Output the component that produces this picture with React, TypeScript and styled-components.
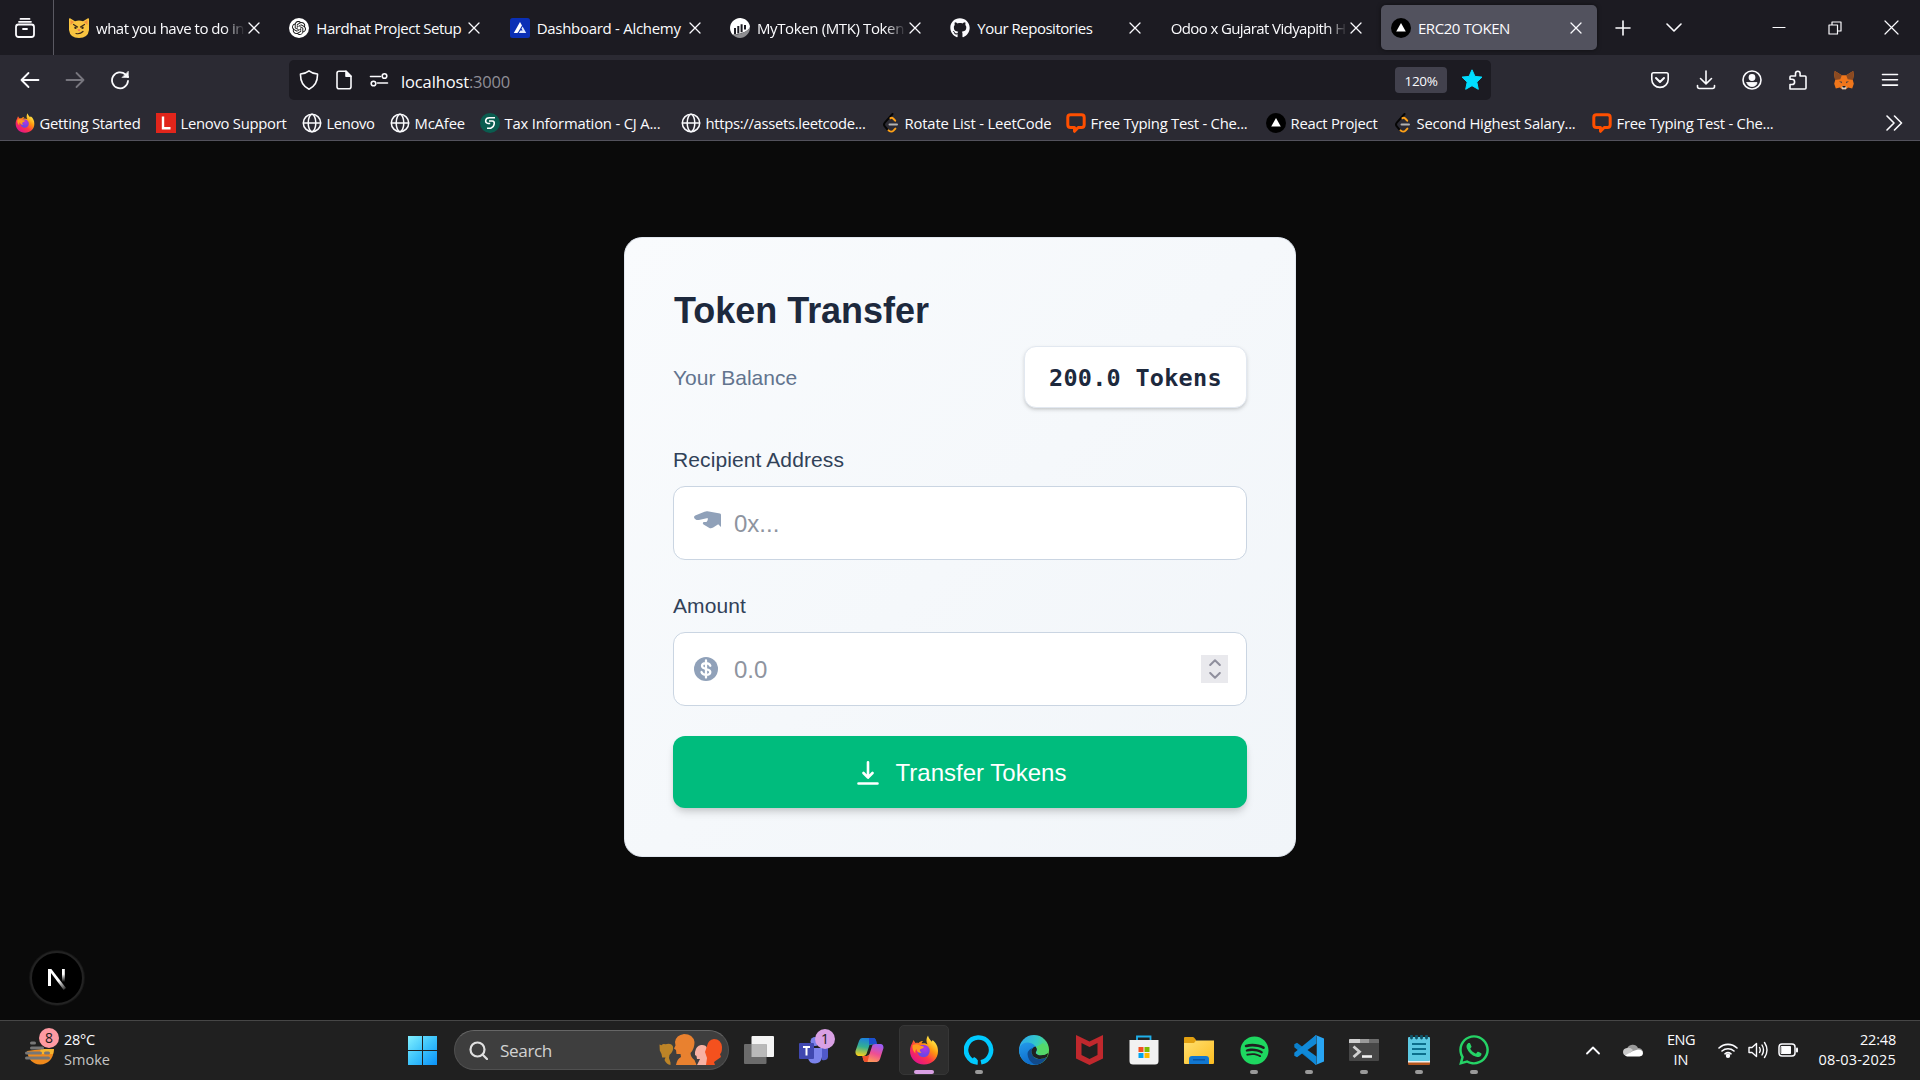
import React, { useLayoutEffect, useRef, useState } from "react";
import styled, { createGlobalStyle, css } from "styled-components";
import { FaGithub, FaSpotify, FaWhatsapp } from "react-icons/fa";
import { SiOpenai } from "react-icons/si";

const ui = `"Open Sans", "Noto Sans", sans-serif`;
const body = `"Liberation Sans", Arial, sans-serif`;

const Global = createGlobalStyle`
  * { box-sizing: border-box; }
  body { margin: 0; background: #0a0a0a; overflow: hidden; }
  svg { display: block; flex: none; }
`;

const Screen = styled.div`
  width: 1920px;
  height: 1080px;
  display: flex;
  flex-direction: column;
  font-family: ${ui};
  font-size: 15px;
  color: #fbfbfe;
`;

/* ---------- text tracked to a given width ---------- */
const Tracked = styled.span`
  display: inline-block;
  white-space: pre;
`;

function Fit({ w, children }: { w: number; children: string }) {
  const ref = useRef<HTMLSpanElement>(null);
  const [spacing, setSpacing] = useState(0);
  useLayoutEffect(() => {
    if (ref.current) {
      const natural = ref.current.getBoundingClientRect().width;
      setSpacing((w - natural) / children.length);
    }
  }, []);
  return (
    <Tracked ref={ref} style={{ letterSpacing: spacing }}>
      {children}
    </Tracked>
  );
}

/* ---------- tab strip ---------- */
const TabStrip = styled.div`
  height: 55px;
  background: #1c1b22;
  display: flex;
  align-items: center;
`;
const ViewButton = styled.div`
  width: 54px;
  height: 55px;
  border-right: 1px solid #5a5962;
  display: flex;
  align-items: center;
  padding: 1px 0 0 15px;
  margin-right: 5px;
`;
const Tab = styled.div<{ $active?: boolean }>`
  width: 216px;
  height: 45px;
  margin-right: 4.33px;
  padding: 0 15px 0 10px;
  border-radius: 5px;
  display: flex;
  align-items: center;
  ${(p) =>
    p.$active &&
    css`
      background: #52525e;
      box-shadow: 0 0 4px rgba(0, 0, 0, 0.5);
    `}
`;
const TabIcon = styled.span`
  width: 20px;
  margin-right: 7px;
  flex: none;
`;
const TabLabel = styled.span<{ $fade?: boolean }>`
  flex: 1;
  overflow: hidden;
  white-space: nowrap;
  line-height: 24px;
  padding-top: 1px;
  margin-right: 3px;
  ${(p) => p.$fade && "mask-image: linear-gradient(to left, transparent, #000 20px);"}
`;
const NewTab = styled.div`
  display: flex;
  align-items: center;
  padding-left: 14px;
  gap: 35px;
`;
const WindowButtons = styled.div`
  margin-left: auto;
  padding-right: 21px;
  display: flex;
  align-items: center;
  gap: 42px;
`;

/* ---------- navigation bar ---------- */
const NavBar = styled.div`
  height: 50px;
  background: #2b2a33;
  display: flex;
  align-items: center;
`;
const NavButtons = styled.div`
  width: 289px;
  padding-left: 20px;
  display: flex;
  gap: 25px;
`;
const UrlBar = styled.div`
  width: 1202px;
  height: 40px;
  border-radius: 5px;
  background: #1c1b22;
  display: flex;
  align-items: center;
  padding: 0 8px 0 10px;
`;
const UrlIcons = styled.div`
  display: flex;
  gap: 15px;
  width: 102px;
`;
const UrlText = styled.div`
  flex: 1;
  font-size: 16.5px;
  line-height: 24px;
  padding-top: 3px;
`;
const Dim = styled.span`
  color: #8f8e96;
`;
const Zoom = styled.div`
  width: 52px;
  height: 26px;
  border-radius: 4px;
  background: #42414d;
  font-size: 13.5px;
  line-height: 28px;
  text-align: center;
  margin-right: 14px;
`;
const ToolIcons = styled.div`
  margin-left: auto;
  width: 250px;
  display: flex;
  justify-content: space-between;
  align-items: center;
  margin-right: 20px;
`;

/* ---------- bookmarks ---------- */
const Bookmarks = styled.div`
  height: 36px;
  background: #2b2a33;
  border-bottom: 1px solid #53525c;
  display: flex;
  align-items: center;
  padding: 0 17px 0 14.5px;
`;
const Bookmark = styled.div<{ $w: number }>`
  width: ${(p) => p.$w}px;
  flex: none;
  display: flex;
  align-items: center;
  gap: 5px;
  line-height: 24px;
  font-size: 14.8px;
`;
const Overflow = styled.div`
  margin-left: auto;
`;

/* ---------- page ---------- */
const Page = styled.main`
  flex: 1;
  background: #0a0a0a;
  position: relative;
  display: flex;
  flex-direction: column;
  align-items: center;
  padding-top: 96px;
  font-family: ${body};
`;
const Card = styled.section`
  width: 672px;
  height: 620px;
  border: 1px solid #e2e8f0;
  border-radius: 18px;
  background: linear-gradient(135deg, #f9fbfd 0%, #f1f5f9 100%);
  padding: 48px;
  display: flex;
  flex-direction: column;
`;
const Title = styled.h1`
  margin: 0 0 11px;
  padding: 1px 0 0 1px;
  font-size: 36px;
  line-height: 48px;
  font-weight: 700;
  color: #1d293d;
`;
const BalanceRow = styled.div`
  display: flex;
  justify-content: space-between;
  align-items: center;
  height: 62px;
  margin-bottom: 37px;
  font-size: 21px;
  color: #62748e;
`;
const BalanceLabel = styled.span`
  padding-top: 2px;
`;
const Balance = styled.div`
  height: 62px;
  width: 223px;
  border: 1px solid #e2e8f0;
  border-radius: 12px;
  background: #fff;
  box-shadow: 0 2px 4px rgba(0, 0, 0, 0.12), 0 2px 3px -1px rgba(0, 0, 0, 0.1);
  padding-left: 24px;
  font-family: "DejaVu Sans Mono", monospace;
  font-weight: 700;
  font-size: 23.5px;
  line-height: 62px;
  color: #1d293d;
`;
const Label = styled.label`
  font-size: 21px;
  line-height: 30px;
  color: #314158;
  margin-bottom: 11px;
`;
const Field = styled.div<{ $gap: number }>`
  height: 74px;
  border: 1px solid #cad5e2;
  border-radius: 12px;
  background: #fff;
  display: flex;
  align-items: center;
  padding: 0 18px 0 20px;
  margin-bottom: ${(p) => p.$gap}px;
`;
const FieldIcon = styled.span<{ $up?: number }>`
  width: 40px;
  padding-bottom: ${(p) => p.$up || 0}px;
`;
const Placeholder = styled.span`
  flex: 1;
  font-size: 24px;
  line-height: 36px;
  color: #8e949f;
  padding-top: 1px;
`;
const Stepper = styled.span`
  width: 27px;
  height: 28px;
  background: #e9e9ed;
  display: flex;
  flex-direction: column;
  align-items: center;
  justify-content: center;
  gap: 6px;
`;
const Submit = styled.button`
  height: 72px;
  border: 0;
  border-radius: 12px;
  background: #00bc7d;
  color: #fff;
  font-family: ${body};
  font-size: 24px;
  line-height: 36px;
  display: flex;
  align-items: center;
  justify-content: center;
  gap: 17px;
  padding: 1px 0 0 3px;
  box-shadow: 0 6px 9px -1px rgba(0, 0, 0, 0.12), 0 3px 6px -2px rgba(0, 0, 0, 0.12);
`;
const DevBadge = styled.div`
  position: absolute;
  left: 30px;
  bottom: 15px;
  width: 54px;
  height: 54px;
  border-radius: 50%;
  background: #000;
  border: 2px solid #232323;
  box-shadow: 0 0 0 1px #161616;
  display: flex;
  align-items: center;
  justify-content: center;
`;

/* ---------- taskbar ---------- */
const Taskbar = styled.footer`
  height: 60px;
  background: #202020;
  border-top: 1px solid #464646;
  display: flex;
  align-items: center;
  padding-bottom: 1px;
`;
const Weather = styled.div`
  width: 408px;
  padding-left: 25px;
  display: flex;
  gap: 6px;
  line-height: 20px;
  font-size: 14.5px;
`;
const WeatherArt = styled.div`
  position: relative;
  width: 33px;
  height: 40px;
  padding-top: 10px;
`;
const Count = styled.span<{ $bg: string; $x: number; $y: number }>`
  position: absolute;
  left: ${(p) => p.$x}px;
  top: ${(p) => p.$y}px;
  width: 20px;
  height: 20px;
  border-radius: 50%;
  background: ${(p) => p.$bg};
  color: #1a1a1a;
  font-size: 14px;
  line-height: 20px;
  text-align: center;
`;
const Grey = styled.div`
  color: #c4c4c4;
`;
const Search = styled.div`
  width: 275px;
  height: 40px;
  margin-left: 17px;
  border-radius: 20px;
  border: 1px solid #505050;
  border-top-color: #666;
  background: #3e3e3e;
  display: flex;
  align-items: center;
  padding: 0 6px 0 14px;
  color: #d2d2d2;
  font-size: 17.2px;
`;
const SearchText = styled.span`
  flex: 1;
  padding-left: 12px;
`;
const Apps = styled.div`
  display: flex;
  margin-left: 5px;
`;
const App_ = styled.div<{ $active?: boolean }>`
  position: relative;
  width: 50px;
  height: 50px;
  margin-right: 5px;
  border-radius: 5px;
  border: 1px solid ${(p) => (p.$active ? "#363636" : "transparent")};
  background: ${(p) => (p.$active ? "#2d2d2d" : "transparent")};
  display: flex;
  align-items: center;
  justify-content: center;
`;
const Dot = styled.span<{ $active?: boolean }>`
  position: absolute;
  bottom: 0;
  left: 50%;
  transform: translateX(-50%);
  width: ${(p) => (p.$active ? 20 : 8)}px;
  height: 4px;
  border-radius: 2px;
  background: ${(p) => (p.$active ? "#d9a0e4" : "#9a9a9a")};
`;
const Tray = styled.div`
  margin-left: auto;
  padding-right: 24px;
  display: flex;
  align-items: center;
  line-height: 20px;
  font-size: 14.5px;
`;
const TrayItem = styled.div<{ $r: number }>`
  margin-right: ${(p) => p.$r}px;
`;
const Lang = styled.div`
  width: 28px;
  margin-right: 23px;
  text-align: center;
`;
const Clock = styled.div`
  text-align: right;
`;

/* ---------- line icon helper ---------- */
const L = ({ s = 20, h, vb, sw = 1.6, c = "#fbfbfe", children }: any) => (
  <svg width={s} height={h || s} viewBox={vb || `0 0 ${s} ${h || s}`} fill="none" stroke={c} strokeWidth={sw} strokeLinecap="round" strokeLinejoin="round">
    {children}
  </svg>
);

const Close = () => (
  <L s={12} sw={1.3}><path d="M1 1l10 10M11 1L1 11" /></L>
);
const Firefox = ({ s, id }: { s: number; id: string }) => (
  <svg width={s} height={s} viewBox="0 0 30 30">
    <defs>
      <linearGradient id={id + "a"} x1="0.85" y1="0.1" x2="0.2" y2="0.9">
        <stop offset="0" stopColor="#fff44f" /><stop offset="0.35" stopColor="#ff980e" />
        <stop offset="0.65" stopColor="#ff3647" /><stop offset="1" stopColor="#e31587" />
      </linearGradient>
      <radialGradient id={id + "b"} cx="0.6" cy="0.3" r="0.8">
        <stop offset="0" stopColor="#b833e1" /><stop offset="0.6" stopColor="#7542e5" /><stop offset="1" stopColor="#5b4de0" />
      </radialGradient>
    </defs>
    <path fill={`url(#${id}a)`} d="M19 .5c.5 2.500 2 4 3.500 6 .8-.3 1-.9 1-1.500 4 3 5.500 7 5.500 11 0 8-6 13.500-14 13.500S1 23.500 1 16c0-3.500 1-6 2-7.500L4.500 5l2 3c1-.3 2-.3 3-.1C11 6.500 12.500 6 14 6c-1 1-1.300 1.600-1.300 2.500C15 8 17 8.500 18.500 9.500 17 6.500 17 3.500 19 .5z" />
    <circle cx="14.500" cy="16" r="6.200" fill={`url(#${id}b)`} />
    <path fill="#ff9a1f" d="M3.500 10c3-1.500 6-1 8 1 1.500 0 3 0 3.500 1-1 1.500-3 1.500-4 2.500-.5 1 0 2 1.500 3-2.500 1-5-1-5-3.500-1 1-1.500 2.500-1 4.500C4 16.500 3 13.500 3.500 10z" />
  </svg>
);
const Globe = () => (
  <L vb="0 0 20 20" sw={1.5}>
    <circle cx="10" cy="10" r="8.700" /><ellipse cx="10" cy="10" rx="3.800" ry="8.700" /><path d="M1.500 10h17" />
  </L>
);
const Leet = () => (
  <svg width="18" height="20" viewBox="0 0 18 20" fill="none" strokeWidth="2" strokeLinecap="round" strokeLinejoin="round">
    <path d="M10.500 1L3 9.300c-1.300 1.400-1.300 2.900 0 4.300l2.500 3" stroke="#050505" />
    <path d="M8.500 5.200c1-.6 1.900-.4 2.700.3l2 2.200M6.500 17.400c1.500 1.500 3.700 1.500 5 .2l1.900-2" stroke="#ffa116" />
    <path d="M7.500 11.600h7.500" stroke="#b3b3b3" />
  </svg>
);
const TypeTest = () => (
  <svg width="20" height="20" viewBox="0 0 20 20" fill="none" stroke="#ff4f00" strokeWidth="3" strokeLinejoin="round">
    <path d="M4.500 1.800h11q2.700 0 2.700 2.700v7.300q0 2.700-2.700 2.700h-3.300L8.500 18.300v-3.800h-4q-2.700 0-2.700-2.700V4.500q0-2.700 2.700-2.700z" />
  </svg>
);
const Vercel = () => (
  <svg width="20" height="20" viewBox="0 0 20 20">
    <circle cx="10" cy="10" r="10" fill="#000" /><path d="M10 5l4.800 8.500H5.200z" fill="#fff" />
  </svg>
);

const DevilCat = () => (
  <svg width="20" height="20" viewBox="0 0 20 20">
    <path d="M0 1q0-1 1-.8l5 3q4-1.200 8 0l5-3q1-.2 1 .8v11q-1 8-10 8T0 12z" fill="#f9c440" />
    <path d="M1.500 2v5L5 4zM18.500 2v5L15 4z" fill="#f28f3b" />
    <path d="M4.500 6.500l4 2.500M15.500 6.500l-4 2.500M7 15.500q4 1 7-2" stroke="#3b2a1a" strokeWidth="1.200" fill="none" strokeLinecap="round" />
    <circle cx="6.500" cy="9.700" r="1.200" fill="#3b2a1a" /><circle cx="13.500" cy="9.700" r="1.200" fill="#3b2a1a" />
    <path d="M8.500 11.500h3L10 13.300z" fill="#f0506e" />
  </svg>
);
const ChatGpt = () => (
  <svg width="20" height="20" viewBox="0 0 20 20">
    <circle cx="10" cy="10" r="10" fill="#fff" />
    <g transform="translate(3 3)"><SiOpenai size={14} color="#111" /></g>
  </svg>
);
const Alchemy = () => (
  <svg width="20" height="20" viewBox="0 0 20 20">
    <rect width="20" height="20" rx="2.500" fill="#0a2fb5" />
    <path d="M10 4l2 3.400-3.600 6.300-1 1.300H3.800z" fill="#fff" /><path d="M12.600 8.400L16.200 15H8.800l1.600-2.600h2.200l-1.100-2z" fill="#dfe8ff" />
  </svg>
);
const Etherscan = () => (
  <svg width="20" height="20" viewBox="0 0 20 20">
    <path d="M2.700 16.800A10 10 0 1 1 20 9c-1 3-5 6.500-17.300 7.800z" fill="#fff" />
    <path d="M20 9c.3 6-4.500 11-10 11-3 0-5.500-1.200-7.300-3.200C9.500 17 17 14 20 9z" fill="#8d8d90" />
    <path d="M5 10v6M8.300 8v7.400M11.600 6.200v8M15 7v4.500" stroke="#1c1b22" strokeWidth="2" />
  </svg>
);
const Fox = () => (
  <svg width="20" height="20" viewBox="0 0 20 20">
    <path d="M.8 1l7 4.300h4.400l7-4.300.6 4-1 5 1 3.800-1.600 4.600-4-.8-2.300 1.700H8.100l-2.300-1.700-4 .8L.2 13.800l1-3.800-1-5z" fill="#f0761b" />
    <path d="M.8 1l7 4.300-1.500 4-5.300.7-.8-5zM19.200 1l-7 4.300 1.500 4 5.300.7.8-5z" fill="#8a4a22" />
    <path d="M5 11.300l3 .5-.3 1.400zM15 11.300l-3 .5.3 1.400z" fill="#2f3a4a" />
    <path d="M7.500 16.500h5l-.5 2.800H8z" fill="#d9cfc6" /><path d="M8.400 16h3.200l-.4 1.500H8.800z" fill="#16181c" />
  </svg>
);

const tabs: { icon?: React.ReactNode; text: string; w: number; fade?: boolean; active?: boolean }[] = [
  { icon: <DevilCat />, text: "what you have to do in", w: 148, fade: true },
  { icon: <ChatGpt />, text: "Hardhat Project Setup", w: 145 },
  { icon: <Alchemy />, text: "Dashboard - Alchemy", w: 144 },
  { icon: <Etherscan />, text: "MyToken (MTK) Token", w: 147, fade: true },
  { icon: <FaGithub size={20} />, text: "Your Repositories", w: 115 },
  { text: "Odoo x Gujarat Vidyapith H", w: 175, fade: true },
  { icon: <Vercel />, text: "ERC20 TOKEN", w: 92, active: true },
];

const LenovoL = () => (
  <svg width="20" height="20" viewBox="0 0 20 20"><rect width="20" height="20" fill="#e1251b" /><path d="M7 3.500v11.700h7.500" stroke="#fff" strokeWidth="2.400" fill="none" /></svg>
);
const CJ = () => (
  <svg width="20" height="20" viewBox="0 0 20 20">
    <circle cx="10" cy="10" r="10" fill="#0a5c4f" />
    <path d="M15 4.800H9.500Q6 4.800 5.700 7.500T8.200 10.500h2M9 8h3.300q2.300 0 1.900 3t-3.500 4.200H7" stroke="#fff" strokeWidth="1.600" fill="none" />
  </svg>
);
const marks: [React.ReactNode, string, number, number][] = [
  [<Firefox s={20} id="bm" />, "Getting Started", 101, 141],
  [<LenovoL />, "Lenovo Support", 106, 146],
  [<Globe />, "Lenovo", 48, 88],
  [<Globe />, "McAfee", 50.5, 90],
  [<CJ />, "Tax Information - CJ A...", 156, 201],
  [<Globe />, "https://assets.leetcode...", 160, 201],
  [<Leet />, "Rotate List - LeetCode", 147, 184],
  [<TypeTest />, "Free Typing Test - Che...", 157, 200],
  [<Vercel />, "React Project", 87, 128],
  [<Leet />, "Second Highest Salary...", 159, 198],
  [<TypeTest />, "Free Typing Test - Che...", 157, 200],
];

/* ---------- taskbar drawings ---------- */
const Windows = () => (
  <svg width="29" height="29" viewBox="0 0 29 29">
    <defs><linearGradient id="win" x1="0" y1="0" x2="1" y2="1"><stop offset="0" stopColor="#82f0ff" /><stop offset="0.500" stopColor="#3cc3fb" /><stop offset="1" stopColor="#0a91f8" /></linearGradient></defs>
    <path fill="url(#win)" d="M0 0h14v14H0zM15 0h14v14H15zM0 15h14v14H0zM15 15h14v14H15z" />
  </svg>
);
const People = () => (
  <svg width="63" height="32" viewBox="0 0 63 32">
    <path d="M.5 10.500l2 .8q1.500-2 4-1l3-.5q3.500.2 4.500 3 .8 4.500-3.500 8.200l-.5 3 1.500 4.500v2.500q-4-.5-6-5l1-2.500H3.200L2.500 20 .8 16.500z" fill="#bd8427" />
    <path d="M16 8q1-7 9-8 9 0 10.500 8 0 7-4 11 0 4 4 7l2 5H17q1-6 5-8l-.5-3h-4l-.5-4-2-1.500 1.500-3z" fill="#e9812f" />
    <path d="M36 18q1-6 6-7 5-.5 6 3v17H38l3-6h-3l-.5-3-1.500-1z" fill="#f7b1a3" />
    <path d="M48 12q1-6 7-7 7 0 8 8 0 6-2 7l1 3-7 5 1 3H47l1-7-2-6z" fill="#f4511e" />
  </svg>
);
const TaskView = () => (
  <svg width="30" height="28" viewBox="0 0 30 28">
    <rect x="7.500" y="0" width="22.500" height="21" rx="1" fill="#f4f4f4" />
    <rect x="0" y="8" width="22.500" height="20" rx="1" fill="#6b6b6b" />
    <path d="M7.500 8h15v13h-15z" fill="#b9b9b9" />
  </svg>
);
const Teams = () => (
  <svg width="30" height="27" viewBox="0 0 30 27">
    <circle cx="16" cy="4.500" r="4.500" fill="#7b83eb" />
    <path d="M21 11h8v9q-1 4-6 3z" fill="#5059c9" />
    <path d="M9 11h14v9q-1 6.500-7 6.500T9 21z" fill="#7b83eb" />
    <rect x="0" y="6" width="15" height="16" rx="1" fill="#4048b0" />
    <path d="M4 10h7M7.500 10v8.500" stroke="#fff" strokeWidth="2" />
  </svg>
);
const Copilot = () => (
  <svg width="29" height="26" viewBox="0 0 29 26">
    <defs>
      <linearGradient id="c1" x1="0.500" y1="0" x2="0.300" y2="1"><stop offset="0" stopColor="#1b7fe0" /><stop offset="0.500" stopColor="#34b090" /><stop offset="1" stopColor="#f8cf1c" /></linearGradient>
      <linearGradient id="c2" x1="0.700" y1="0" x2="0.300" y2="1"><stop offset="0" stopColor="#9a5cf5" /><stop offset="0.500" stopColor="#ef4e93" /><stop offset="1" stopColor="#ffa153" /></linearGradient>
    </defs>
    <path d="M7 1h12q2 1 2.500 6l-7 1-3 9q-1 2-3 2H3q-3-1-2.500-5L4 4q1-3 3-3z" fill="url(#c1)" />
    <path d="M14 1h5q2 0 3 6h-5q-2 0-3 1z" fill="#1b4fd0" />
    <path d="M22 25H10q-2-1-2.500-6h4q2 0 3-2l3-9q1-1 3-1h5q3 0 3 4l-3.500 11q-1 3-3 3z" fill="url(#c2)" />
    <path d="M7.500 19h4q2 0 3-2l-2 8H10q-2-1-2.500-6z" fill="#f0502c" />
  </svg>
);
const Alexa = () => (
  <svg width="30" height="30" viewBox="0 0 30 30"><path d="M13.500 27.500A12.500 12.500 0 1 1 17 27.300" stroke="#00caff" strokeWidth="4.600" fill="none" /><path d="M13.500 29.800V25q-1-2-3.500-3l-3 4z" fill="#00caff" /></svg>
);
const Edge = () => (
  <svg width="30" height="30" viewBox="0 0 30 30">
    <defs>
      <linearGradient id="e1" x1="0" y1="0.200" x2="1" y2="0.600"><stop offset="0" stopColor="#2ea8f0" /><stop offset="0.500" stopColor="#33c8c8" /><stop offset="1" stopColor="#5fe050" /></linearGradient>
      <linearGradient id="e2" x1="0.300" y1="0" x2="0.700" y2="1"><stop offset="0" stopColor="#2196e8" /><stop offset="1" stopColor="#0b63c4" /></linearGradient>
    </defs>
    <circle cx="15" cy="15" r="15" fill="url(#e1)" />
    <path d="M0 14Q2 7 9 7.500q8 1 8 7-3-1-4.500 2-1 4 4 7 5 2 11-1Q23 30 15 30 1 29 0 14z" fill="url(#e2)" />
    <path d="M13 13q-6 3-4 9 2 6 8 7.800 7-1 11-7.800-6 4-12 1-5-4-3-10z" fill="#114a8b" />
    <path d="M16.500 11.500q2.500 2.500.5 5.500-1 2 3 3.200 5 .8 9.300-2.200L28 22q-5 3-10 1.500-6-2-5.500-8 1-3.500 4-4z" fill="#202020" />
    <path d="M17 12q2.500 2 1 5 1.500 3.500 7 2.800 4-1 5-5.500L24 8z" fill="#54d869" />
  </svg>
);
const McAfee = () => (
  <svg width="27" height="30" viewBox="0 0 27 30"><path d="M0 0l13.500 6.500L27 0v23.500L13.500 30 0 23.500zM5.500 8v12l8 4 8-4V8l-8 4z" fill="#c0282d" fillRule="evenodd" /></svg>
);
const Store = () => (
  <svg width="30" height="30" viewBox="0 0 30 30">
    <path d="M8 6V1.500h13.500V6" stroke="#1fb0ea" strokeWidth="1.800" fill="none" />
    <path d="M.5 5h29v21q0 3.500-3.500 3.500H4Q.5 29.500.5 26z" fill="#f2f2f2" />
    <path d="M9.500 12h5v5h-5z" fill="#f25022" /><path d="M15.500 12h5v5h-5z" fill="#7fba00" /><path d="M9.500 18h5v5h-5z" fill="#00a4ef" /><path d="M15.500 18h5v5h-5z" fill="#ffb900" />
  </svg>
);
const Folder = () => (
  <svg width="30" height="27" viewBox="0 0 30 27">
    <defs><linearGradient id="fo" x1="0" y1="0" x2="1" y2="1"><stop offset="0" stopColor="#ffdf70" /><stop offset="1" stopColor="#fcbd20" /></linearGradient></defs>
    <path d="M0 1q0-1 1-1h8q1 0 3 3v4H0z" fill="#e2a010" />
    <path d="M0 6h10l2-2.500h18V26q0 1-1 1H1q-1 0-1-1z" fill="url(#fo)" />
    <path d="M5 27v-5q0-3 3-3h14q3 0 3 3v5z" fill="#1177d1" /><path d="M9 22.800h12" stroke="#0a4f9c" strokeWidth="1.300" />
  </svg>
);
const VSCode = () => (
  <svg width="30" height="30" viewBox="0 0 30 30">
    <path d="M22 0l-13 12.300L3 7.800.3 9.300v3L22 30z" fill="#0a7fcb" />
    <path d="M22 30L9 17.700l-6 4.500L.3 20.700v-3L22 0z" fill="#1089d8" />
    <path d="M21.500 0L30 3.500v23L21.500 30q1-.5 1-2V2q0-1.500-1-2z" fill="#28a5f3" />
    <path d="M22.500 8.500v13L13.500 15z" fill="#202020" />
  </svg>
);
const Terminal = () => (
  <svg width="30" height="22" viewBox="0 0 30 22">
    <rect width="30" height="22" rx="1" fill="#474747" /><path d="M1 0h10v4H0V1q0-1 1-1z" fill="#cfcfcf" /><path d="M11 0h9.500v4H11z" fill="#9a9a9a" /><path d="M20.500 0H29q1 0 1 1v3h-9.500z" fill="#6c6c6c" />
    <path d="M4.500 7.500l6 5.200-6 5.300" stroke="#d0d0d0" strokeWidth="2.800" fill="none" /><path d="M13 17.500h10" stroke="#f0f0f0" strokeWidth="2.600" />
  </svg>
);
const Notepad = () => (
  <svg width="22" height="30" viewBox="0 0 22 30">
    <rect y="26" width="22" height="4" rx="1" fill="#b5561c" /><rect y="24" width="22" height="3.500" fill="#eee" /><rect y="2" width="22" height="24" rx="1" fill="#5cc9e2" />
    <path d="M4 9h14M4 14h14M4 19h14" stroke="#0c6f8c" strokeWidth="1.800" />
    <path d="M3.500 1v2M8.500 1v2M13.500 1v2M18.500 1v2" stroke="#0f5468" strokeWidth="2.800" strokeLinecap="round" />
  </svg>
);

const apps: { icon: React.ReactNode; run?: boolean; active?: boolean; badge?: string }[] = [
  { icon: <TaskView /> },
  { icon: <Teams />, badge: "1" },
  { icon: <Copilot /> },
  { icon: <Firefox s={30} id="tb" />, active: true, run: true },
  { icon: <Alexa />, run: true },
  { icon: <Edge /> },
  { icon: <McAfee /> },
  { icon: <Store /> },
  { icon: <Folder /> },
  { icon: <FaSpotify size={29} color="#1ed760" />, run: true },
  { icon: <VSCode />, run: true },
  { icon: <Terminal />, run: true },
  { icon: <Notepad />, run: true },
  { icon: <FaWhatsapp size={34} color="#25d366" />, run: true },
];

export default function App() {
  return (
    <Screen>
      <Global />
      <TabStrip>
        <ViewButton>
          <L sw={1.8}><rect x="1" y="6.500" width="18" height="12.500" rx="2.500" /><path d="M4 3.800h12M5.500.9h9M8 11h4" /></L>
        </ViewButton>
        {tabs.map((t) => (
          <Tab key={t.text} $active={t.active}>
            {t.icon && <TabIcon>{t.icon}</TabIcon>}
            <TabLabel $fade={t.fade}><Fit w={t.w}>{t.text}</Fit></TabLabel>
            <Close />
          </Tab>
        ))}
        <NewTab>
          <L s={16}><path d="M8 1v14M1 8h14" /></L>
          <L s={16} h={10}><path d="M1 1l7 7 7-7" /></L>
        </NewTab>
        <WindowButtons>
          <L s={14} sw={1.2}><path d="M1 6.500h12" /></L>
          <L s={14} sw={1.2}><path d="M1 4h8.500v9H1zM4 4V1h9v9H9.500" /></L>
          <L s={15} sw={1.2}><path d="M1 1l13 13M14 1L1 14" /></L>
        </WindowButtons>
      </TabStrip>

      <NavBar>
        <NavButtons>
          <L sw={1.8}><path d="M18.500 10H1.500M8.500 3l-7 7 7 7" /></L>
          <L sw={1.8} c="#77767e"><path d="M1.500 10h17M11.500 3l7 7-7 7" /></L>
          <L sw={1.8}><path d="M18 11a8 8 0 1 1-2.500-6.500L18 7" /><path d="M18.300 1.500v6h-6z" fill="#fbfbfe" strokeWidth="0.600" /></L>
        </NavButtons>
        <UrlBar>
          <UrlIcons>
            <L><path d="M10 .9C7.500 3 4.500 3.800 1.500 4 1.300 10.500 4 16.500 10 19.200 16 16.500 18.700 10.500 18.500 4 15.500 3.800 12.500 3 10 .9z" /></L>
            <L><path d="M5 1.200h7l5 5v10.500q0 2-2 2H5q-2 0-2-2V3.200q0-2 2-2z" /><path d="M12 1.200v5h5z" fill="#fbfbfe" /></L>
            <L><path d="M1.500 6.500h10M8.500 13h10" /><circle cx="15.500" cy="6" r="2.300" /><circle cx="4.500" cy="13.500" r="2.300" /></L>
          </UrlIcons>
          <UrlText><Fit w={68}>localhost</Fit><Dim><Fit w={41}>:3000</Fit></Dim></UrlText>
          <Zoom><Fit w={33}>120%</Fit></Zoom>
          <svg width="22" height="22" viewBox="0 0 22 22"><path d="M11 .8l3 6.600 7 .7-5.200 5 1.500 7.200L11 16.700l-6.300 3.600 1.500-7.200L1 8.100l7-.7z" fill="#00ddff" stroke="#00ddff" strokeLinejoin="round" /></svg>
        </UrlBar>
        <ToolIcons>
          <L><path d="M3.500 2.700h13q1.700 0 1.700 1.700v5a8.200 8 0 0 1-16.400 0v-5q0-1.700 1.700-1.700z" /><path d="M6 8l4 4 4-4" strokeWidth="2" /></L>
          <L><path d="M10 1v12.500M4.500 8.500l5.500 5.300 5.500-5.300M1.500 15.500v1q0 2 2 2h13q2 0 2-2v-1" /></L>
          <L><circle cx="10" cy="10" r="9" /><circle cx="10" cy="7.500" r="2.600" fill="#fbfbfe" /><path d="M5 12.500h10a5 4 0 0 1-10 0z" fill="#fbfbfe" strokeWidth="0.800" /></L>
          <L><path d="M2 19V14.500h2a2.600 2.600 0 0 0 0-5.200H2V7q0-1 1-1h4.500V3.500a2.300 2.300 0 0 1 4.600 0V6H17q1 0 1 1v11q0 1-1 1z" /></L>
          <Fox />
          <L><path d="M2.500 4.500h15M2.500 9.800h15M2.500 15.100h15" /></L>
        </ToolIcons>
      </NavBar>

      <Bookmarks>
        {marks.map(([icon, text, w, total], i) => (
          <Bookmark key={i} $w={total}>{icon}<Fit w={w}>{text}</Fit></Bookmark>
        ))}
        <Overflow><L s={17} h={16}><path d="M1 1l7 7-7 7M8.500 1l7 7-7 7" /></L></Overflow>
      </Bookmarks>

      <Page>
        <Card>
          <Title><Fit w={255}>Token Transfer</Fit></Title>
          <BalanceRow>
            <BalanceLabel>Your Balance</BalanceLabel>
            <Balance><Fit w={172.8}>200.0 Tokens</Fit></Balance>
          </BalanceRow>
          <Label><Fit w={171}>Recipient Address</Fit></Label>
          <Field $gap={31}>
            <FieldIcon $up={6}>
              <svg width="27" height="18" viewBox="0 0 27 18"><path d="M0 6.200Q0 5 1.200 4.500L10.500.8Q12 .1 13.500.3L26 2.600Q27 2.800 27 4v12l-2.800-2.800-5 3.300Q17 18 15 16.800L9.500 13.500Q8 12.200 9.500 11h3q2-1.500 1.200-4L6 8.800Q1 9.800 0 6.200z" fill="#90a1b9" /></svg>
            </FieldIcon>
            <Placeholder>0x...</Placeholder>
          </Field>
          <Label><Fit w={73}>Amount</Fit></Label>
          <Field $gap={30}>
            <FieldIcon>
              <svg width="24" height="24" viewBox="0 0 24 24"><circle cx="12" cy="12" r="12" fill="#90a1b9" /><path d="M16.300 8.700C15.500 6.800 13.700 6.200 12 6.200c-2.300 0-4 1.100-4 2.900 0 4 8.300 1.800 8.300 5.900 0 1.800-1.900 2.900-4.200 2.900-2.200 0-4-.9-4.600-2.900M12 3.500v17" stroke="#fff" strokeWidth="2.300" fill="none" strokeLinecap="round" /></svg>
            </FieldIcon>
            <Placeholder>0.0</Placeholder>
            <Stepper>
              <L s={12} h={7} sw={2} c="#8f8f9d"><path d="M1.200 6L6 1.200 10.800 6" /></L>
              <L s={12} h={7} sw={2} c="#8f8f9d"><path d="M1.200 1L6 5.800 10.800 1" /></L>
            </Stepper>
          </Field>
          <Submit>
            <L s={22} h={24} sw={2.6} c="#fff"><path d="M11 1.300v15M6.500 12l4.500 4.700 4.500-4.700M1.500 22.500h19" /></L>
            <Fit w={171}>Transfer Tokens</Fit>
          </Submit>
        </Card>
        <DevBadge>
          <svg width="20" height="24" viewBox="0 0 20 24">
            <defs>
              <linearGradient id="n1" x1="0" y1="0" x2="0" y2="1"><stop offset="0.400" stopColor="#fff" /><stop offset="1" stopColor="#fff" stopOpacity="0" /></linearGradient>
              <linearGradient id="n2" gradientUnits="userSpaceOnUse" x1="10" y1="12" x2="19" y2="24"><stop offset="0.200" stopColor="#fff" /><stop offset="1" stopColor="#fff" stopOpacity="0.100" /></linearGradient>
            </defs>
            <path d="M1 3h3v17H1z" fill="#fff" /><path d="M15 3h2.800v13H15z" fill="url(#n1)" /><path d="M1 3h3.300L19 22l-2.300 2z" fill="url(#n2)" />
          </svg>
        </DevBadge>
      </Page>

      <Taskbar>
        <Weather>
          <WeatherArt>
            <svg width="30" height="26" viewBox="0 0 30 26">
              <path d="M2 11q2 13 13 13.500Q28 24 29 9H17z" fill="#f08a1c" /><path d="M16 9h13l-1 5H14z" fill="#f5b52e" />
              <path d="M6.500 3h3M6.500 8h11M1.500 13h14M20.500 13h3M1.500 18h22" stroke="#777" strokeWidth="3" strokeLinecap="round" />
            </svg>
            <Count $bg="#ff9aa2" $x={14} $y={-2}>8</Count>
          </WeatherArt>
          <div><div><Fit w={31}>28°C</Fit></div><Grey><Fit w={46}>Smoke</Fit></Grey></div>
        </Weather>
        <Windows />
        <Search>
          <L s={19} sw={2.2} c="#e0e0e0"><circle cx="8.500" cy="8.500" r="7" /><path d="M13.500 13.500l4.500 4.500" /></L>
          <SearchText><Fit w={52}>Search</Fit></SearchText>
          <People />
        </Search>
        <Apps>
          {apps.map((a, i) => (
            <App_ key={i} $active={a.active}>
              {a.icon}
              {a.badge && <Count $bg="#d9a0e4" $x={25} $y={3}>{a.badge}</Count>}
              {a.run && <Dot $active={a.active} />}
            </App_>
          ))}
        </Apps>
        <Tray>
          <TrayItem $r={23}><L s={14} h={9} sw={1.8}><path d="M1 7.500L7 1.500l6 6" /></L></TrayItem>
          <TrayItem $r={24}>
            <svg width="20" height="14" viewBox="0 0 20 14"><path d="M4 6a6 6 0 0 1 11-1q4 0 5 4L10 12z" fill="#9a9a9a" /><path d="M4 5q3-1 6 2l-6 6q-4-.5-4-4t4-4z" fill="#c9c9c9" /><path d="M2 12.500l8-4.500 5-1.500q4.500 0 5 3.500 0 3-3.500 3.500H4z" fill="#fff" /></svg>
          </TrayItem>
          <Lang><Fit w={28}>ENG</Fit><Fit w={15}>IN</Fit></Lang>
          <TrayItem $r={10}>
            <L s={20} h={16} sw={1.6}><path d="M1 6a13 13 0 0 1 18 0M4 9a9 9 0 0 1 12 0M7 11.800a5 5 0 0 1 6 0" /><circle cx="10" cy="13.800" r="1.400" fill="#fff" /></L>
          </TrayItem>
          <TrayItem $r={10}>
            <L s={20} h={18} sw={1.4}><path d="M1 6.500h3l4.500-4v13l-4.500-4H1zM11.500 6.500q1.500 2.500 0 5M14 4q3 5 0 10M16.500 1.500q5 7.500 0 15" /></L>
          </TrayItem>
          <TrayItem $r={20.5}>
            <L s={20} h={14} sw={1.5}><rect x="1" y="1" width="16" height="12" rx="3" /><rect x="3.500" y="3.500" width="9" height="7" fill="#fff" strokeWidth="1" /><path d="M19 5.500v3" strokeWidth="2" /></L>
          </TrayItem>
          <Clock><div><Fit w={36}>22:48</Fit></div><div><Fit w={77.5}>08-03-2025</Fit></div></Clock>
        </Tray>
      </Taskbar>
    </Screen>
  );
}
